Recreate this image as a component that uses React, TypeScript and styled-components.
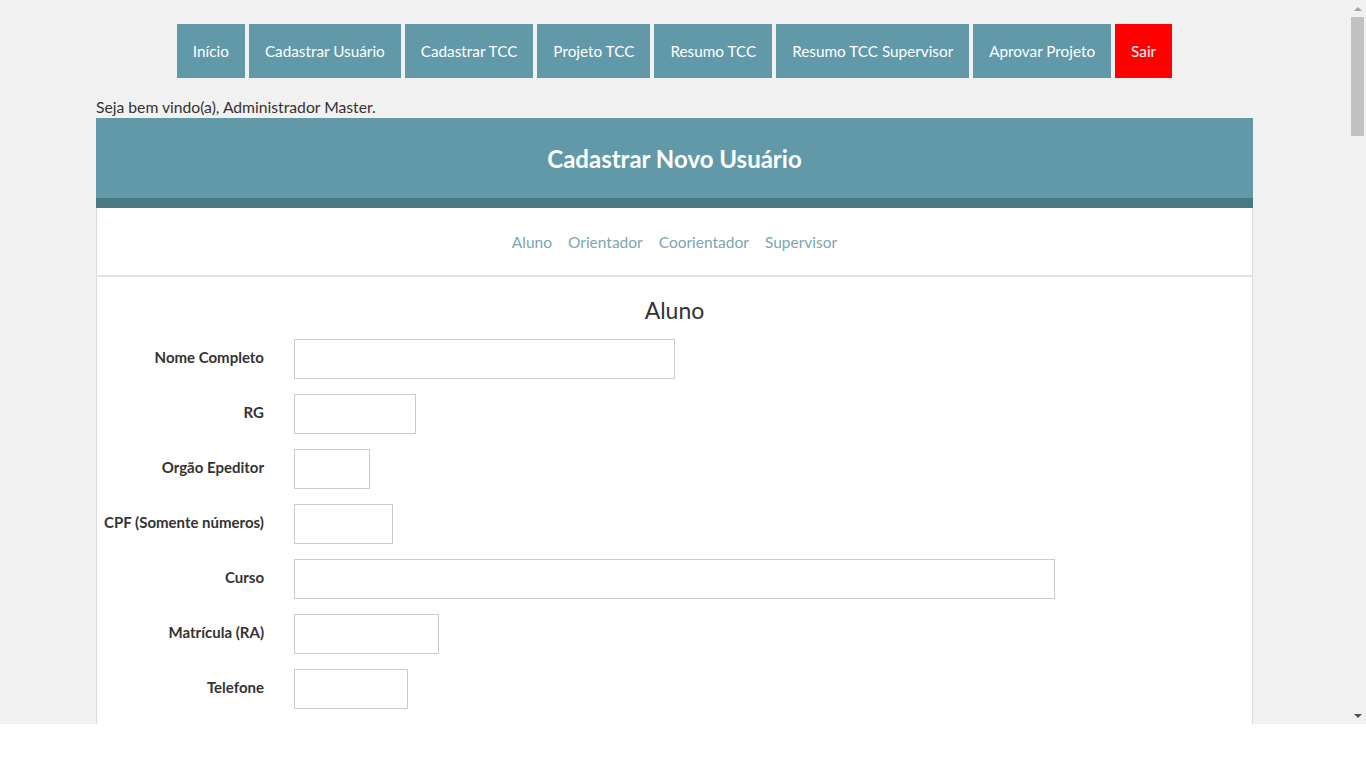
import React from "react";
import styled, { createGlobalStyle } from "styled-components";

const Global = createGlobalStyle`
  html, body { margin: 0; padding: 0; background: #ffffff; }
  * { box-sizing: border-box; }
`;

const FONT = `"Lato", "Open Sans", sans-serif`;

const Window = styled.div`
  width: 1366px;
  height: 724px;
  display: flex;
  background: #f1f1f1;
  font-family: ${FONT};
  color: #333;
`;

const Page = styled.div`
  flex: 1;
  height: 724px;
  overflow: hidden;
  padding-top: 24px;
`;

const ScrollBar = styled.div`
  width: 17px;
  height: 724px;
  background: #f1f1f1;
  display: flex;
  flex-direction: column;
  align-items: center;
`;

const ArrowBox = styled.div`
  height: 17px;
  width: 17px;
  display: flex;
  align-items: center;
  justify-content: center;
`;

const Arrow = styled.span<{ $down?: boolean }>`
  width: 0;
  height: 0;
  border-left: 4px solid transparent;
  border-right: 4px solid transparent;
  ${(p) =>
    p.$down
      ? "border-top: 4px solid #505050;"
      : "border-bottom: 4px solid #a3a3a3;"}
`;

const Track = styled.div`
  flex: 1;
  width: 100%;
  padding: 0 2px;
`;

const Thumb = styled.div`
  height: 119px;
  background: #c1c1c1;
`;

const Nav = styled.nav`
  display: flex;
  justify-content: center;
  gap: 4px;
`;

const NavButton = styled.a<{ $danger?: boolean }>`
  display: flex;
  align-items: center;
  height: 54px;
  padding: 0 16px;
  background: ${(p) => (p.$danger ? "#ff0000" : "#6199a8")};
  color: #fff;
  font-size: 15.3px;
  text-decoration: none;
  cursor: pointer;
`;

const Container = styled.div`
  width: 1157px;
  margin: 0 auto;
`;

const Welcome = styled.p`
  margin: 19px 0 0;
  font-size: 15.7px;
  line-height: 21px;
  color: #333;
`;

const Header = styled.header`
  height: 90px;
  background: #6199a8;
  border-bottom: 10px solid #4a7983;
  display: flex;
  align-items: center;
  justify-content: center;
`;

const Title = styled.h1`
  margin: 0;
  color: #fff;
  font-size: 24px;
  font-weight: 700;
`;

const Card = styled.div`
  background: #fff;
  border-left: 1px solid #dcdcdc;
  border-right: 1px solid #dcdcdc;
  min-height: 3900px;
`;

const Tabs = styled.div`
  height: 69px;
  display: flex;
  justify-content: center;
  align-items: center;
  gap: 16px;
  border-bottom: 2px solid #e3e3e3;
`;

const TabLink = styled.a`
  color: #7aa6b0;
  font-size: 15.5px;
  text-decoration: none;
  cursor: pointer;
`;

const SectionTitle = styled.h2`
  margin: 0;
  padding-top: 18px;
  text-align: center;
  font-size: 23px;
  font-weight: 400;
  line-height: 30px;
  color: #333;
`;

const Form = styled.form`
  display: grid;
  grid-template-columns: 167px 1fr;
  column-gap: 30px;
  row-gap: 15px;
  padding-top: 14px;
`;

const Label = styled.label`
  display: flex;
  align-items: center;
  justify-content: flex-end;
  height: 40px;
  padding-bottom: 4px;
  font-size: 15px;
  font-weight: 700;
  color: #333;
  white-space: nowrap;
`;

const Input = styled.input<{ $w: number }>`
  width: ${(p) => p.$w}px;
  height: 40px;
  border: 1px solid #cccccc;
  background: #fff;
  padding: 0 8px;
  font-family: ${FONT};
  font-size: 15px;
  outline: none;
`;

const navItems = [
  "Início",
  "Cadastrar Usuário",
  "Cadastrar TCC",
  "Projeto TCC",
  "Resumo TCC",
  "Resumo TCC Supervisor",
  "Aprovar Projeto",
];

const fields: { label: string; w: number }[] = [
  { label: "Nome Completo", w: 381 },
  { label: "RG", w: 122 },
  { label: "Orgão Epeditor", w: 76 },
  { label: "CPF (Somente números)", w: 99 },
  { label: "Curso", w: 761 },
  { label: "Matrícula (RA)", w: 145 },
  { label: "Telefone", w: 114 },
];

export default function App() {
  return (
    <>
      <Global />
      <Window>
        <Page>
          <Nav>
            {navItems.map((n) => (
              <NavButton key={n}>{n}</NavButton>
            ))}
            <NavButton $danger>Sair</NavButton>
          </Nav>
          <Container>
            <Welcome>Seja bem vindo(a), Administrador Master.</Welcome>
            <Header>
              <Title>Cadastrar Novo Usuário</Title>
            </Header>
            <Card>
              <Tabs>
                <TabLink>Aluno</TabLink>
                <TabLink>Orientador</TabLink>
                <TabLink>Coorientador</TabLink>
                <TabLink>Supervisor</TabLink>
              </Tabs>
              <SectionTitle>Aluno</SectionTitle>
              <Form>
                {fields.map((f) => (
                  <React.Fragment key={f.label}>
                    <Label>{f.label}</Label>
                    <div>
                      <Input $w={f.w} />
                    </div>
                  </React.Fragment>
                ))}
              </Form>
            </Card>
          </Container>
        </Page>
        <ScrollBar>
          <ArrowBox>
            <Arrow />
          </ArrowBox>
          <Track>
            <Thumb />
          </Track>
          <ArrowBox>
            <Arrow $down />
          </ArrowBox>
        </ScrollBar>
      </Window>
    </>
  );
}
